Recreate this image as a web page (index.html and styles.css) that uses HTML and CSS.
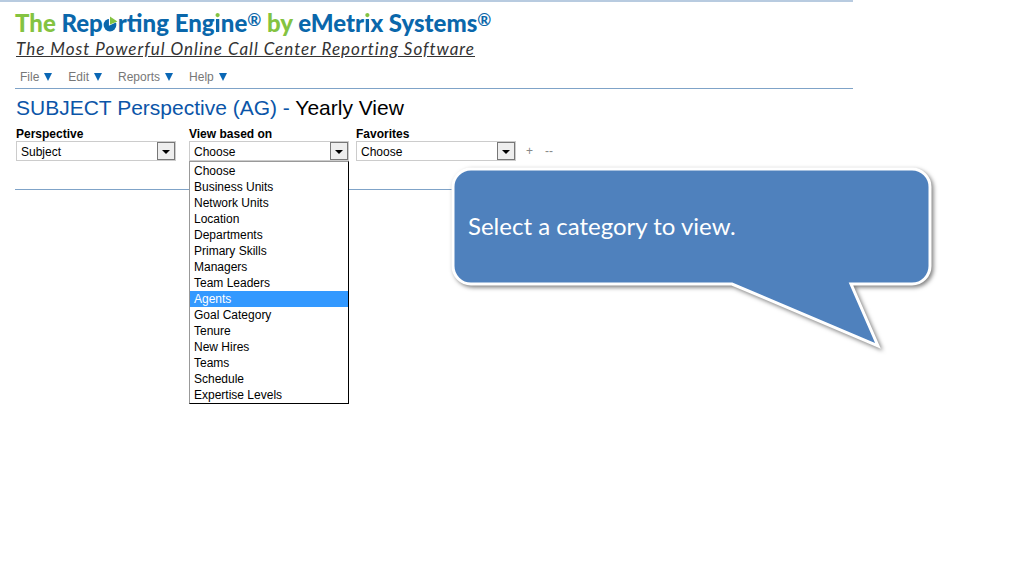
FILE: index.html
```html
<!DOCTYPE html>
<html lang="en">
<head>
    <meta charset="UTF-8">
    <meta name="viewport" content="width=device-width, initial-scale=1.0">
    <title>The Reporting Engine - Subject Perspective</title>
    <link rel="stylesheet" href="styles.css">
</head>
<body>
    <div class="page">
        <header class="banner">
            <div class="logo">
                <span class="green">The</span> Rep<svg class="pie" viewBox="0 0 14 16" role="img" aria-label="o"><circle cx="6.5" cy="9.5" r="6" fill="#0a67ab"/><path d="M5.5 10V1L14 6z" fill="#fff"/><path d="M6.5 9V1.5L13.5 6z" fill="#84c341"/></svg>rt<span class="dot">i</span>ng Eng<span class="dot">i</span>ne<sup>®</sup> <span class="green">by</span> eMetr<span class="dot">i</span>x Systems<sup>®</sup>
            </div>
            <p class="tagline">The Most Powerful Online Call Center Reporting Software</p>
        </header>

        <nav class="menu">
            <a href="#">File <span class="arrow"></span></a>
            <a href="#">Edit <span class="arrow"></span></a>
            <a href="#">Reports <span class="arrow"></span></a>
            <a href="#">Help <span class="arrow"></span></a>
        </nav>

        <main>
            <h1>SUBJECT Perspective (AG) - <span>Yearly View</span></h1>

            <form class="filters">
                <div class="field">
                    <label for="perspective">Perspective</label>
                    <select id="perspective">
                        <option>Subject</option>
                    </select>
                </div>
                <div class="field view-field">
                    <label for="view">View based on</label>
                    <select id="view">
                        <option>Choose</option>
                    </select>
                    <!-- Open list under the select -->
                    <ul class="options">
                        <li>Choose</li>
                        <li>Business Units</li>
                        <li>Network Units</li>
                        <li>Location</li>
                        <li>Departments</li>
                        <li>Primary Skills</li>
                        <li>Managers</li>
                        <li>Team Leaders</li>
                        <li class="active">Agents</li>
                        <li>Goal Category</li>
                        <li>Tenure</li>
                        <li>New Hires</li>
                        <li>Teams</li>
                        <li>Schedule</li>
                        <li>Expertise Levels</li>
                    </ul>
                </div>
                <div class="field">
                    <label for="favorites">Favorites</label>
                    <select id="favorites">
                        <option>Choose</option>
                    </select>
                </div>
                <div class="tools">
                    <button type="button" aria-label="Add favorite">+</button>
                    <button type="button" aria-label="Remove favorite">--</button>
                </div>
            </form>
        </main>
    </div>

    <!-- Help callout -->
    <aside class="callout">
        <svg viewBox="0 0 484 190" aria-hidden="true">
            <path d="M20 2H461A18 18 0 0 1 479 20V99A18 18 0 0 1 461 117H400L427 179L281 117H20A18 18 0 0 1 2 99V20A18 18 0 0 1 20 2Z" fill="#4f81bd" stroke="#fff" stroke-width="3"/>
        </svg>
        <p>Select a category to view.</p>
    </aside>
</body>
</html>
```
FILE: styles.css
```css
/* General Styles */
* {
    box-sizing: border-box;
}

body {
    margin: 0;
    background-color: #fff;
    color: #000;
    font-family: "Liberation Sans", Arial, sans-serif;
    font-size: 12px;
}

.page {
    width: 83.3%;
    min-height: 100vh;
    border-top: 2px solid #b8cbe0;
    padding-left: 15px;
}

/* Banner */
.banner {
    padding-top: 6px;
}

.logo {
    color: #0a67ab;
    font-family: Lato, Calibri, sans-serif;
    font-size: 24px;
    font-weight: 900;
    line-height: 30px;
    white-space: nowrap;
}

.logo sup {
    font-size: 17px;
    font-weight: 700;
    line-height: 16px;
    vertical-align: 6px;
}

.green {
    color: #84c341;
}

/* blue letter with a green dot */
.dot {
    background: linear-gradient(#84c341 0 11px, #0a67ab 11px);
    -webkit-background-clip: text;
    background-clip: text;
    color: transparent;
}

.pie {
    width: 15px;
    height: 17px;
}

.tagline {
    margin: 0 0 0 1px;
    color: #333;
    font-family: Lato, Calibri, sans-serif;
    font-size: 17px;
    font-style: italic;
    letter-spacing: 1px;
    line-height: 22px;
    text-decoration: underline;
    white-space: nowrap;
}

/* Menu bar */
.menu {
    display: flex;
    gap: 16px;
    margin-top: 8px;
    padding: 0 5px;
    height: 21px;
    border-bottom: 1px solid #7fa3c8;
}

.menu a {
    display: flex;
    align-items: center;
    gap: 5px;
    height: 18px;
    color: #777;
    text-decoration: none;
}

.arrow {
    border: 4px solid transparent;
    border-top: 8px solid #0a67b5;
    border-bottom: 0;
}

main {
    padding-bottom: 28px;
    border-bottom: 1px solid #7fa3c8;
}

h1 {
    margin: 6px 0 6px 1px;
    color: #0b55a8;
    font-size: 21px;
    font-weight: normal;
    line-height: 26px;
}

h1 span {
    color: #000;
}

/* Filters */
.filters {
    display: flex;
    gap: 13px;
    padding-left: 1px;
}

.field {
    position: relative;
    width: 160px;
}

.view-field {
    margin-right: -6px;
}

.field label {
    display: block;
    font-weight: bold;
    line-height: 14px;
}

select {
    display: block;
    width: 100%;
    height: 20px;
    padding: 1px 4px 0;
    appearance: none;
    border: 1px solid #ccc;
    border-radius: 0;
    background: #fff url("data:image/svg+xml,%3Csvg xmlns='http://www.w3.org/2000/svg' width='18' height='18'%3E%3Crect x='.5' y='.5' width='17' height='17' fill='%23eee' stroke='%23777'/%3E%3Cpath d='M5 8h8l-4 4z'/%3E%3C/svg%3E") no-repeat right center;
    color: #000;
    font: inherit;
}

.options {
    position: absolute;
    z-index: 1;
    top: 100%;
    left: 0;
    width: 100%;
    margin: 0;
    padding: 1px 0 0;
    border: 1px solid #000;
    border-top-color: #999;
    border-left-color: #999;
    background: #fff;
    list-style: none;
}

.options li {
    padding-left: 4px;
    line-height: 16px;
}

.options .active {
    background: #3399ff;
    color: #fff;
}

.tools {
    display: flex;
    align-items: flex-end;
    gap: 12px;
    margin-left: -3px;
}

.tools button {
    padding: 0;
    border: 0;
    background: none;
    color: #888;
    font: inherit;
    line-height: 20px;
}

/* Callout over the page */
.callout {
    position: absolute;
    top: 167px;
    left: 451px;
    width: 484px;
}

.callout svg {
    display: block;
    width: 100%;
    filter: drop-shadow(2px 2px 2px rgba(0, 0, 0, 0.5));
}

.callout p {
    position: absolute;
    top: 43px;
    left: 17px;
    margin: 0;
    color: #fff;
    font-family: Lato, Calibri, sans-serif;
    font-size: 24px;
    line-height: 32px;
}
```
